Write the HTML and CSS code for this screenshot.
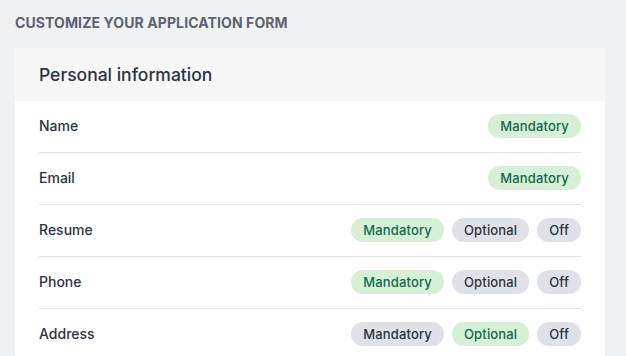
FILE: index.html
```html
<!DOCTYPE html>
<html lang="en">
<head>
  <meta charset="UTF-8" />
  <title>Customize your application form</title>
  <link rel="stylesheet" href="styles.css">
</head>
<body>
  <div class="page">
    <h2 class="section-title">Customize your application form</h2>

    <div class="card">
      <div class="card-header">Personal information</div>
      <ul class="field-list">
        <li class="field">
          <span class="field-name">Name</span>
          <div class="pills">
            <span class="pill pill-on">Mandatory</span>
          </div>
        </li>
        <li class="field">
          <span class="field-name">Email</span>
          <div class="pills">
            <span class="pill pill-on">Mandatory</span>
          </div>
        </li>
        <li class="field">
          <span class="field-name">Resume</span>
          <div class="pills">
            <span class="pill pill-on">Mandatory</span>
            <span class="pill">Optional</span>
            <span class="pill">Off</span>
          </div>
        </li>
        <li class="field">
          <span class="field-name">Phone</span>
          <div class="pills">
            <span class="pill pill-on">Mandatory</span>
            <span class="pill">Optional</span>
            <span class="pill">Off</span>
          </div>
        </li>
        <li class="field">
          <span class="field-name">Address</span>
          <div class="pills">
            <span class="pill">Mandatory</span>
            <span class="pill pill-on">Optional</span>
            <span class="pill">Off</span>
          </div>
        </li>
      </ul>
    </div>
  </div>
</body>
</html>
```

FILE: styles.css
```css
/* Base */
html, body {
  margin: 0;
  padding: 0;
  background: #f0f1f3;
  font-family: 'Inter', 'Noto Sans', sans-serif;
  color: #2d3440;
}

.page {
  padding: 13px 21px 0 15px;
}

/* Section title */
.section-title {
  margin: 0 0 16px 0;
  font-size: 14px;
  font-weight: 700;
  letter-spacing: 0.1px;
  text-transform: uppercase;
  color: #5b6370;
  line-height: 19px;
}

/* Card */
.card {
  background: #fff;
  overflow: hidden;
}

.card-header {
  background: #f7f7f7;
  height: 53px;
  padding: 0 24px;
  display: flex;
  align-items: center;
  font-size: 17.5px;
  font-weight: 500;
  color: #2d3440;
}

.field-list {
  list-style: none;
  margin: 0;
  padding: 0 24px;
}

.field {
  height: 52px;
  padding-bottom: 2px;
  display: flex;
  align-items: center;
  justify-content: space-between;
  border-bottom: 1px solid #dfe2e7;
  box-sizing: border-box;
}

.field-name {
  font-size: 14px;
  font-weight: 500;
  color: #2d3440;
}

/* Pills */
.pills {
  display: flex;
  gap: 8px;
}

.pill {
  height: 24px;
  line-height: 24px;
  padding: 0 12px;
  border-radius: 12px;
  background: #dee1e7;
  color: #2d3440;
  font-size: 13px;
  font-weight: 500;
  letter-spacing: 0.15px;
}

.pill-on {
  background: #d5f0d7;
  color: #0f6a4e;
}
```
